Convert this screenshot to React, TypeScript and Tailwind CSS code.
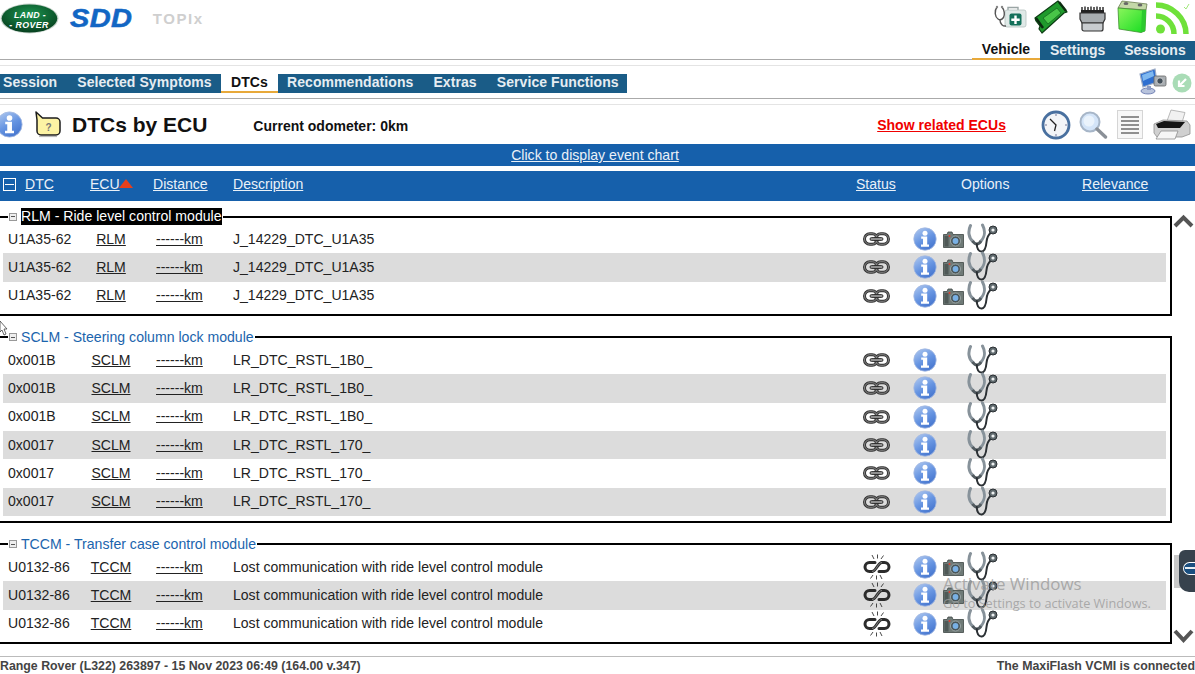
import React from 'react'

const FONT = { fontFamily: '"Liberation Sans", Arial, sans-serif' }

// ── Icons ──
function InfoIcon({ className = '', size = 24 }: { className?: string; size?: number }) {
  return (
    <svg className={`shrink-0 ${className}`} width={size} height={size} viewBox="0 0 24 24">
      <defs>
        <linearGradient id="infoFill" x1="0.2" y1="0" x2="0.8" y2="1">
          <stop offset="0" stopColor="#a9c4ee" />
          <stop offset="0.5" stopColor="#6795e2" />
          <stop offset="1" stopColor="#4272cc" />
        </linearGradient>
      </defs>
      <circle cx="12" cy="12" r="11.2" fill="url(#infoFill)" stroke="#a3b9e2" strokeWidth="0.8" />
      <circle cx="12" cy="6.2" r="2.5" fill="#fff" />
      <path d="M8.2 9.6h6v8h1.8v2.2H8v-2.2h2v-5.800H8.200z" fill="#fff" />
    </svg>
  )
}

function CameraIcon() {
  return (
    <svg width="21" height="17" viewBox="0 0 21 17">
      <path d="M0.500 3.500h3.500l1-2.500h4l1 2.500h10.500v13H0.500z" fill="#6f7a77" stroke="#3f4745" strokeWidth="0.8" />
      <rect x="1.500" y="5" width="4" height="10.500" fill="#4f5957" />
      <circle cx="12.500" cy="10" r="5" fill="#4a5659" stroke="#a8b2b2" strokeWidth="0.8" />
      <circle cx="12.500" cy="10" r="2.900" fill="#79b0e4" />
      <circle cx="6.500" cy="5" r="1" fill="#e23b2e" />
    </svg>
  )
}

function StethoscopeIcon() {
  return (
    <svg width="31" height="30" viewBox="0 0 31 30">
      <path d="M3.500 2.500C0.800 8 1.500 15 6 18.500" fill="none" stroke="#87929a" strokeWidth="3" strokeLinecap="round" />
      <path d="M15.500 2c3 5.500 2.500 12-2 16.500" fill="none" stroke="#87929a" strokeWidth="3" strokeLinecap="round" />
      <path d="M5.500 18c1.400 2 3 3 4.300 3s3-1 4.200-3" fill="none" stroke="#525b60" strokeWidth="3" />
      <path d="M9.800 21c0 4.500 1.800 7.800 5 7.500 3.400-.4 4.200-4 4.700-9.500.3-3.500 1.500-7 4.500-9.500" fill="none" stroke="#2b3034" strokeWidth="2" strokeLinecap="round" />
      <circle cx="26" cy="7" r="4" fill="#5f696d" stroke="#2b3034" strokeWidth="1" />
      <circle cx="26" cy="7" r="1.600" fill="#eef1f2" />
    </svg>
  )
}

function ChainIcon() {
  return (
    <svg width="27" height="14" viewBox="0 0 27 14">
      <rect x="1.500" y="1.700" width="13" height="10.600" rx="5.300" fill="none" stroke="#333" strokeWidth="3" />
      <rect x="12.500" y="1.700" width="13" height="10.600" rx="5.300" fill="none" stroke="#333" strokeWidth="3" />
      <rect x="1.500" y="1.700" width="13" height="10.600" rx="5.300" fill="none" stroke="#a8a8a8" strokeWidth="0.7" />
      <rect x="12.500" y="1.700" width="13" height="10.600" rx="5.300" fill="none" stroke="#a8a8a8" strokeWidth="0.7" />
      <rect x="7" y="5.500" width="13" height="3" rx="1.500" fill="#8f8f8f" stroke="#1e1e1e" strokeWidth="0.8" />
    </svg>
  )
}

function BrokenChainIcon() {
  return (
    <svg width="28" height="26" viewBox="0 0 28 26">
      <path d="M12 8.500H6.500a4.500 4.500 0 0 0 0 9H9" fill="none" stroke="#2c2c2c" strokeWidth="3" strokeLinecap="round" />
      <path d="M16 17.500h5.500a4.500 4.500 0 0 0 0-9H19" fill="none" stroke="#2c2c2c" strokeWidth="3" strokeLinecap="round" />
      <path d="M9 17.500c4 0 6-9 10-9" fill="none" stroke="#2c2c2c" strokeWidth="3" />
      <path d="M9 17.500c4 0 6-9 10-9" fill="none" stroke="#a8a8a8" strokeWidth="0.7" />
      <path d="M9 1l2 4M14.500 0.500v4M20.500 1.500L18 5M7.500 24.500L10 21M13.500 25.500v-4M19 25l-2-4" stroke="#333" strokeWidth="0.9" />
    </svg>
  )
}

function MinusBox({ light = false }: { light?: boolean }) {
  if (light) {
    return (
      <span className="flex w-[13px] h-[13px] shrink-0 items-center justify-center border border-white">
        <span className="w-[9px] h-[1px] bg-white" />
      </span>
    )
  }
  return (
    <span className="flex w-[8px] h-[8px] shrink-0 items-center justify-center border border-[#999] bg-[#eee]">
      <span className="w-[4px] h-[1px] bg-[#555]" />
    </span>
  )
}

function LandRoverLogo() {
  return (
    <svg width="59" height="31" viewBox="0 0 59 31">
      <defs>
        <radialGradient id="lrGreen" cx="0.5" cy="0.35" r="0.65">
          <stop offset="0" stopColor="#1c9650" />
          <stop offset="1" stopColor="#07401f" />
        </radialGradient>
      </defs>
      <ellipse cx="29.500" cy="15.500" rx="29" ry="15" fill="#c5d2ca" />
      <ellipse cx="29.500" cy="15.500" rx="27.800" ry="14" fill="url(#lrGreen)" />
      <text x="30" y="14.500" textAnchor="middle" fill="#fff" fontSize="8.800" fontWeight="700" fontStyle="italic" letterSpacing="0.4" style={FONT}>LAND -</text>
      <text x="29" y="25" textAnchor="middle" fill="#fff" fontSize="8.800" fontWeight="700" fontStyle="italic" letterSpacing="0.4" style={FONT}>- ROVER</text>
    </svg>
  )
}

function MedKitIcon({ className = '' }: { className?: string }) {
  return (
    <svg className={className} width="33" height="23" viewBox="0 0 33 23">
      <path d="M14 5V2.500h10V5" fill="none" stroke="#9aa5a5" strokeWidth="1.400" />
      <rect x="11" y="5" width="21" height="17" rx="2" fill="#dfe9e7" stroke="#b5c2c0" strokeWidth="0.8" />
      <rect x="15.500" y="8.500" width="12" height="12" rx="2" fill="#13705a" />
      <path d="M20.300 10.500h2.400v3h3v2.400h-3v3h-2.400v-3h-3v-2.400h3z" fill="#fff" />
      <path d="M3 2C0 6 1 12 4 14c2 1.500 4 .5 5.500-1.500C11 10 10.500 5 8 2" fill="none" stroke="#555" strokeWidth="1.400" />
      <path d="M6 15c0 4 3 6.500 6 6" fill="none" stroke="#555" strokeWidth="1.400" />
      <circle cx="3" cy="2" r="1.200" fill="#888" />
      <circle cx="8" cy="2" r="1.200" fill="#888" />
    </svg>
  )
}

function DeviceIcon({ className = '' }: { className?: string }) {
  return (
    <svg className={className} width="34" height="34" viewBox="0 0 34 34">
      <path d="M1 18L24 1l9 11-3 1-22 20-3-4 1-3-4-5z" fill="#1f9a2c" stroke="#0d3d14" strokeWidth="1.200" strokeLinejoin="round" />
      <path d="M9 18l14-10 4 5-13 11z" fill="#48c548" stroke="#166a20" strokeWidth="0.800" />
      <path d="M2 18l7 10" stroke="#0b2c10" strokeWidth="2.400" />
      <path d="M25 2l7 9" stroke="#0b2c10" strokeWidth="2.400" />
    </svg>
  )
}

function EcuIcon({ className = '' }: { className?: string }) {
  return (
    <svg className={className} width="27" height="27" viewBox="0 0 27 27">
      <path d="M2 5h23v3H2z" fill="#222" />
      <path d="M3 2v3M6 1.500V5M9 2v3M12 1.500V5M15 2v3M18 1.500V5M21 2v3M24 2v3" stroke="#222" strokeWidth="1.400" />
      <path d="M1 8h25v6l-2 4H3l-2-4z" fill="#a8adb0" stroke="#333" strokeWidth="1.200" />
      <path d="M3 18h21v6a2 2 0 0 1-2 2H5a2 2 0 0 1-2-2z" fill="#c8cccf" stroke="#333" strokeWidth="1.200" />
    </svg>
  )
}

function BatteryIcon({ className = '' }: { className?: string }) {
  return (
    <svg className={className} width="31" height="33" viewBox="0 0 31 33">
      <defs>
        <linearGradient id="batFill" x1="0" y1="0" x2="1" y2="1">
          <stop offset="0" stopColor="#8bf55c" />
          <stop offset="1" stopColor="#14dc20" />
        </linearGradient>
      </defs>
      <path d="M1 8L5 1l25 3-1 6z" fill="#c4d8a8" stroke="#6b7d50" strokeWidth="0.800" />
      <path d="M1 8l24 2 4 0-1 21-4 1.500L2 29z" fill="url(#batFill)" stroke="#3f8f30" strokeWidth="0.800" />
      <path d="M25 10l4 0-1 21-4 1.500z" fill="#2cc92e" />
      <ellipse cx="9" cy="3.500" rx="2.400" ry="1.600" fill="#666" />
      <ellipse cx="23" cy="5" rx="2.400" ry="1.600" fill="#666" />
    </svg>
  )
}

function WifiIcon({ className = '' }: { className?: string }) {
  return (
    <svg className={className} width="36" height="33" viewBox="0 0 36 33">
      <circle cx="5.500" cy="27" r="4.500" fill="#6fe13a" />
      <path d="M1 14c10 0 18 8 18 18" fill="none" stroke="#6fe13a" strokeWidth="5.500" />
      <path d="M1 3c16 0 30 13 30 29" fill="none" stroke="#6fe13a" strokeWidth="5.500" />
      <path d="M29 5l2 2 3-5" fill="none" stroke="#9fe87a" strokeWidth="1" />
    </svg>
  )
}

function MonitorCamIcon({ className = '' }: { className?: string }) {
  return (
    <svg className={className} width="28" height="28" viewBox="0 0 28 28">
      <path d="M1 7l15-5 2 13-14 5z" fill="#2f6fd0" stroke="#9aa9c4" strokeWidth="1.200" />
      <path d="M3 8l11-4 1 5-11 5z" fill="#7fb8f0" />
      <ellipse cx="9" cy="24" rx="7" ry="3" fill="#b8c3dc" stroke="#5d6fa8" strokeWidth="0.800" />
      <path d="M8 19h4v4H8z" fill="#8c9cc4" />
      <rect x="15" y="9" width="12" height="10" rx="1.500" fill="#a9aeb2" stroke="#666" strokeWidth="0.800" />
      <circle cx="21" cy="14" r="3.200" fill="#44505a" stroke="#ddd" strokeWidth="0.800" />
    </svg>
  )
}

function GreenArrowIcon({ className = '' }: { className?: string }) {
  return (
    <svg className={className} width="20" height="20" viewBox="0 0 20 20">
      <circle cx="10" cy="10" r="9.500" fill="#a9dcb6" />
      <path d="M14 6l-6.500 6.500M7 7.500v5.500h5.500" fill="none" stroke="#fff" strokeWidth="2.200" />
    </svg>
  )
}

function HelpBubbleIcon({ className = '' }: { className?: string }) {
  return (
    <svg className={className} width="28" height="27" viewBox="0 0 28 27">
      <path d="M2 1l6.500 6H22a4 4 0 0 1 4 4v9a4 4 0 0 1-4 4H7a4 4 0 0 1-4-4V9z" fill="#fdf3a4" stroke="#1c1c1c" strokeWidth="1.500" strokeLinejoin="round" />
      <path d="M5 25.500h18" stroke="#b9b9b9" strokeWidth="1.200" />
      <text x="14.500" y="20" textAnchor="middle" fontSize="10" fontWeight="700" fill="#777" style={FONT}>?</text>
    </svg>
  )
}

function ClockIcon({ className = '' }: { className?: string }) {
  return (
    <svg className={className} width="30" height="30" viewBox="0 0 30 30">
      <circle cx="15" cy="15" r="13" fill="#f3f5f8" stroke="#49709f" strokeWidth="2.800" />
      <path d="M9 9l6 6-1.500 6" fill="none" stroke="#222" strokeWidth="1.300" />
      <circle cx="15" cy="5" r="0.800" fill="#668" />
      <circle cx="25" cy="15" r="0.800" fill="#668" />
      <circle cx="15" cy="25" r="0.800" fill="#668" />
      <circle cx="5" cy="15" r="0.800" fill="#668" />
    </svg>
  )
}

function MagnifierIcon({ className = '' }: { className?: string }) {
  return (
    <svg className={className} width="29" height="28" viewBox="0 0 29 28">
      <circle cx="11" cy="11" r="9.500" fill="#d3e4f8" stroke="#a7b6c8" strokeWidth="2" />
      <circle cx="10" cy="10" r="5.500" fill="#eaf3fc" />
      <path d="M18 18l8.500 8" stroke="#8a9097" strokeWidth="3.400" strokeLinecap="round" />
    </svg>
  )
}

function ListDocIcon({ className = '' }: { className?: string }) {
  return (
    <svg className={className} width="26" height="29" viewBox="0 0 26 29">
      <rect x="0.500" y="0.500" width="25" height="28" fill="#f7f7f7" stroke="#d5d5d5" />
      <path d="M4 7h18M4 11h18M4 15h18M4 19h18M4 23h18" stroke="#6d6d6d" strokeWidth="1.300" />
    </svg>
  )
}

function PrinterIcon({ className = '' }: { className?: string }) {
  return (
    <svg className={className} width="38" height="31" viewBox="0 0 38 31">
      <path d="M14 12l4-11 14 2.500-3 10z" fill="#f1f1f1" stroke="#a8a8a8" strokeWidth="0.800" />
      <path d="M1 15l9-4 24 1 3 4v9l-8 3H4l-3-4z" fill="#d0d0d0" stroke="#8f8f8f" strokeWidth="0.800" />
      <path d="M3 15l8-3 21 1-5 6H5z" fill="#151515" />
      <path d="M8 22h17l-3 8H3z" fill="#f6f6f6" stroke="#8f8f8f" strokeWidth="0.800" />
    </svg>
  )
}

function Cursor() {
  return (
    <svg className="absolute left-0 top-[321px]" width="8" height="15" viewBox="0 0 8 15">
      <path d="M0 0l7 8H4l2 5-2 1-2-5-2 2z" fill="#fff" stroke="#444" strokeWidth="0.800" />
    </svg>
  )
}

// ── Data ──
type Row = { dtc: string; ecu: string; desc: string }
type Group = { title: string; selected?: boolean; camera: boolean; broken: boolean; rows: Row[]; className: string }

const rlm = { dtc: 'U1A35-62', ecu: 'RLM', desc: 'J_14229_DTC_U1A35' }
const sclmA = { dtc: '0x001B', ecu: 'SCLM', desc: 'LR_DTC_RSTL_1B0_' }
const sclmB = { dtc: '0x0017', ecu: 'SCLM', desc: 'LR_DTC_RSTL_170_' }
const tccm = { dtc: 'U0132-86', ecu: 'TCCM', desc: 'Lost communication with ride level control module' }

const groups: Group[] = [
  { title: 'RLM - Ride level control module', selected: true, camera: true, broken: false, rows: [rlm, rlm, rlm], className: 'mt-[8px] pb-[4px]' },
  { title: 'SCLM - Steering column lock module', camera: false, broken: false, rows: [sclmA, sclmA, sclmA, sclmB, sclmB, sclmB], className: 'mt-[13px] pb-[5px]' },
  { title: 'TCCM - Transfer case control module', camera: true, broken: true, rows: [tccm, tccm, tccm], className: 'mt-[13px] pb-[4px]' },
]

function DtcRow({ row, shaded, camera, broken }: { row: Row; shaded: boolean; camera: boolean; broken: boolean }) {
  return (
    <div className={`flex h-[28.33px] items-center text-[14.050px] text-[#222] ${shaded ? 'bg-[#dcdcdc]' : ''}`}>
      <span className="w-[73px] pl-[5px]">{row.dtc}</span>
      <span className="w-[70px] text-center underline">{row.ecu}</span>
      <span className="w-[87px] pl-[10px] underline">------km</span>
      <span className="w-[630px]">{row.desc}</span>
      <span className="flex w-[50px] items-center">{broken ? <BrokenChainIcon /> : <ChainIcon />}</span>
      <InfoIcon />
      <span className="ml-[6px] flex w-[24px] pt-[1px]">{camera && <CameraIcon />}</span>
      <span className="-mt-[2px] flex h-[30px] items-center"><StethoscopeIcon /></span>
    </div>
  )
}

function DtcGroup({ group }: { group: Group }) {
  return (
    <fieldset className={`border-2 border-l-0 border-black pr-[4px] pl-[3px] ${group.className}`}>
      <legend className="ml-[5px] flex h-[17px] items-center gap-[4px] px-[1px] text-[14.100px] leading-[17px]">
        <MinusBox />
        <span className={group.selected ? 'bg-black text-white' : 'text-[#1b64ad]'}>{group.title}</span>
      </legend>
      {group.rows.map((row, i) => (
        <DtcRow key={i} row={row} shaded={i % 2 === 1} camera={group.camera} broken={group.broken} />
      ))}
    </fieldset>
  )
}

export default function App() {
  return (
    <div className="relative flex h-[674px] w-[1195px] flex-col overflow-hidden bg-white" style={FONT}>
      {/* ── Top header ── */}
      <div className="flex h-[60px] shrink-0 items-start">
        <div className="flex flex-1 items-start border-b border-[#aaa] h-[60px]">
          <div className="mt-[3px]"><LandRoverLogo /></div>
          <span className="ml-[11px] mt-[4px] inline-block origin-left scale-x-[1.16] text-[25px] font-bold italic leading-[29px] tracking-[0.3px] text-[#1266c4] [-webkit-text-stroke:0.5px_#1266c4]">SDD</span>
          <span className="ml-[29px] mt-[10px] text-[15px] font-bold leading-[18px] tracking-[1.600px] text-[#cfcfcf]">TOPIx</span>
        </div>
        <div className="flex w-[223px] flex-col items-end">
          <div className="flex h-[41px] w-full items-start pl-[22px]">
            <MedKitIcon className="mt-[5px]" />
            <DeviceIcon className="ml-[7px]" />
            <EcuIcon className="ml-[11px] mt-[5px]" />
            <BatteryIcon className="ml-[11px] mt-[0px]" />
            <WifiIcon className="ml-[7px] mt-[2px]" />
          </div>
          <div className="flex h-[19px] w-full text-[14px] font-bold">
            <span className="flex w-[68px] items-center justify-center border-b-2 border-[#e8a93a] text-[#111]">Vehicle</span>
            <span className="flex flex-1 items-center gap-[19px] bg-[#1a5c87] pb-[1px] pl-[10px] text-[#e6edf2]">
              <span>Settings</span>
              <span>Sessions</span>
            </span>
          </div>
        </div>
      </div>

      {/* ── Secondary nav ── */}
      <div className="mt-[5px] h-[34px] shrink-0 border-y border-t-[#e4e4e4] border-b-[#aaa]">
        <div className="flex h-full items-start justify-between">
          <div className="mt-[8px] flex h-[19px] text-[14px] font-bold tracking-[0.080px] text-[#e6edf2]">
            <span className="flex w-[221px] items-center gap-[20px] bg-[#1a5c87] pb-[2px] pl-[3px]">
              <span>Session</span>
              <span>Selected Symptoms</span>
            </span>
            <span className="flex w-[57px] items-center justify-center border-b-2 border-[#e8a93a] pb-[1px] text-[#111]">DTCs</span>
            <span className="flex w-[349px] items-center gap-[20px] bg-[#1a5c87] pb-[2px] pl-[9px]">
              <span>Recommendations</span>
              <span>Extras</span>
              <span>Service Functions</span>
            </span>
          </div>
          <div className="flex items-start pr-[3px]">
            <MonitorCamIcon className="mt-[1px]" />
            <GreenArrowIcon className="ml-[5px] mt-[7px]" />
          </div>
        </div>
      </div>

      {/* ── Title row ── */}
      <div className="mt-[5px] flex h-[40px] shrink-0 items-center border-t border-[#e4e4e4]">
        <InfoIcon className="-ml-[4px]" size={27} />
        <HelpBubbleIcon className="ml-[11px]" />
        <h1 className="ml-[10px] text-[21px] font-bold text-[#111]">DTCs by ECU</h1>
        <span className="ml-[46px] mt-[3px] text-[14px] font-bold text-[#111]">Current odometer: 0km</span>
        <span className="ml-[469px] mt-[3px] text-[14.050px] font-bold text-[#f00000] underline">Show related ECUs</span>
        <ClockIcon className="ml-[35px]" />
        <MagnifierIcon className="ml-[8px]" />
        <ListDocIcon className="ml-[9px]" />
        <PrinterIcon className="ml-[10px]" />
      </div>

      {/* ── Blue bars ── */}
      <div className="flex h-[22px] shrink-0 items-center justify-center bg-[#1660ab] pr-[5px] pt-[1px] text-[14.100px] text-[#eaf1f8] underline">
        Click to display event chart
      </div>
      <div className="mt-[5px] flex h-[30px] shrink-0 items-center bg-[#1660ab] pb-[3px] text-[14.050px] text-[#eaf1f8]">
        <span className="w-[25px] pl-[3px]"><MinusBox light /></span>
        <span className="w-[65px] underline">DTC</span>
        <span className="relative w-[63px] underline">
          ECU
          <span className="absolute left-[29px] top-[5px] h-0 w-0 border-x-[7px] border-b-[9px] border-x-transparent border-b-[#e8401c]" />
        </span>
        <span className="w-[80px] underline">Distance</span>
        <span className="w-[623px] underline">Description</span>
        <span className="w-[105px] underline">Status</span>
        <span className="w-[121px]">Options</span>
        <span className="underline">Relevance</span>
      </div>

      {/* ── Groups + scroll column ── */}
      <div className="-mt-[1px] flex shrink-0">
        <div className="w-[1172px]">
          {groups.map((group) => (
            <DtcGroup key={group.title} group={group} />
          ))}
        </div>
        <div className="flex flex-1 flex-col items-center justify-between pt-[14px] text-[#555]">
          <svg width="21" height="14" viewBox="0 0 21 14">
            <path d="M2 12l8.500-8.500L19 12" fill="none" stroke="#555" strokeWidth="4" />
          </svg>
          <svg width="21" height="15" viewBox="0 0 21 15">
            <path d="M2 2l8.500 9L19 2" fill="none" stroke="#555" strokeWidth="4" />
          </svg>
        </div>
      </div>

      {/* ── Status footer ── */}
      <div className="mt-[12px] flex flex-1 items-start justify-between border-t border-[#bbb] pt-[2px] text-[12.350px] font-bold leading-[14px] text-[#444]">
        <span>Range Rover (L322) 263897 - 15 Nov 2023 06:49 (164.00 v.347)</span>
        <span>The MaxiFlash VCMI is connected</span>
      </div>

      <Cursor />

      {/* Remote desktop tab */}
      <div className="absolute left-[1174px] top-[555px] h-[33px] w-[21px] bg-[#c9c9c9]" />
      <div className="absolute left-[1179px] top-[550px] flex h-[42px] w-[16px] items-center rounded-tl-[6px] rounded-bl-[10px] bg-[#37424d] pb-[6px] pl-[4px]">
        <span className="flex h-[13px] w-[12px] items-center rounded-l-full border border-r-0 border-white bg-[#1a4f80]">
          <span className="ml-[1px] h-[2px] w-[10px] bg-[#e6edf2]" />
        </span>
      </div>

      {/* Activation watermark */}
      <div className="absolute left-[943px] top-[574px] text-[#9a9a9a]/80" style={{ fontFamily: '"Open Sans", sans-serif' }}>
        <div className="text-[16.900px] leading-[20px]">Activate Windows</div>
        <div className="mt-[1px] whitespace-nowrap text-[12.700px] leading-[17px]">Go to Settings to activate Windows.</div>
      </div>
    </div>
  )
}
